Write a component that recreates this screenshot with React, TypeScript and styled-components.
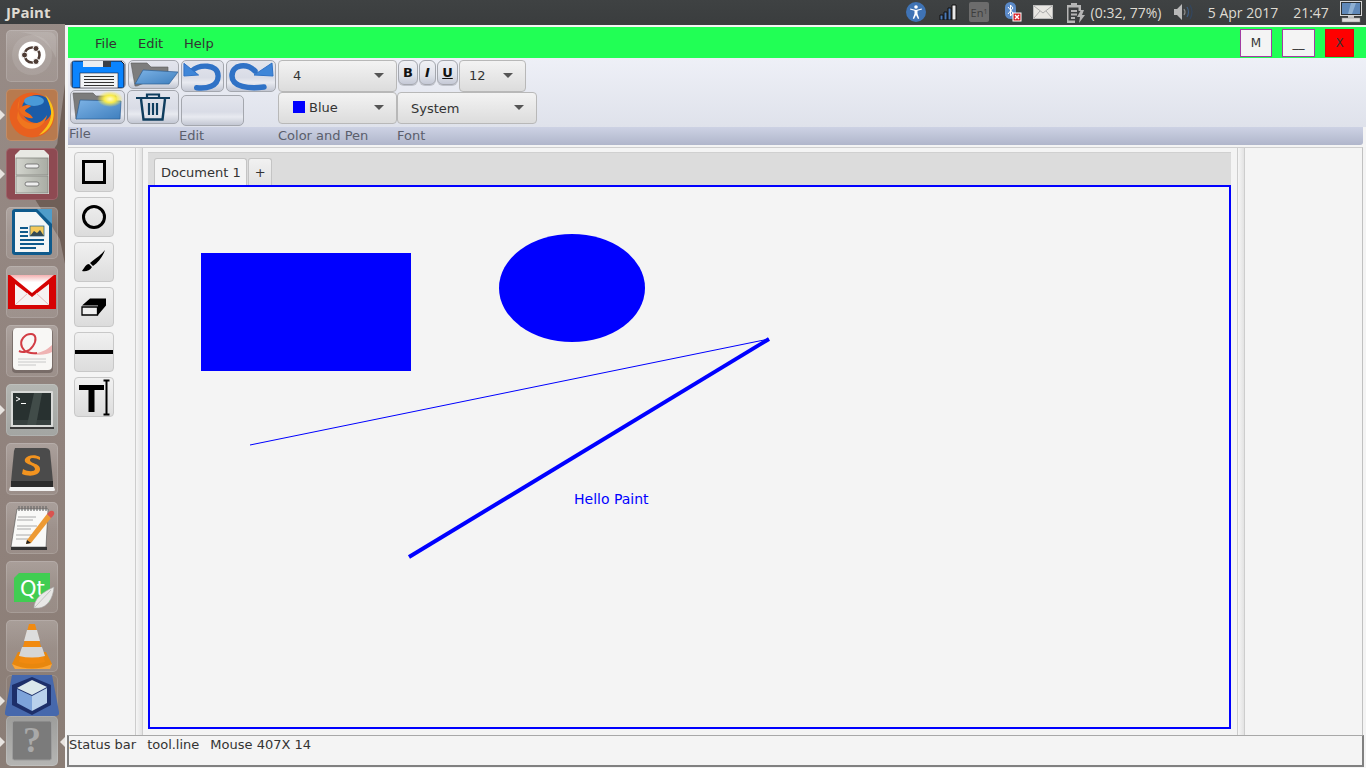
import { ReactNode } from 'react';
import styled, { createGlobalStyle } from 'styled-components';

const GlobalStyle = createGlobalStyle`
  html, body {
    margin: 0;
    width: 1366px;
    height: 768px;
    overflow: hidden;
    background: #f0f0f0;
    font-family: "DejaVu Sans", sans-serif;
    font-size: 13px;
    color: #333;
  }
  * { box-sizing: border-box; }
  svg { display: block; }
`;

const Screen = styled.div`
  width: 1366px;
  height: 768px;
  display: flex;
  flex-direction: column;
  background: #3c3f40;
`;

/* ---------- panel at the top ---------- */
const TopBar = styled.header`
  height: 24px;
  flex: none;
  display: flex;
  align-items: center;
  background: linear-gradient(#3f4243, #3a3d3e);
  color: #dfdbd2;
  font-family: "Open Sans", sans-serif;
`;
const AppTitle = styled.span`
  margin-left: 6px;
  font-size: 15px;
  font-weight: 700;
  flex: 1;
`;
const TrayItem = styled.span<{ $w: number; $ml: number }>`
  width: ${(p) => p.$w}px;
  margin-left: ${(p) => p.$ml}px;
  flex: none;
  display: flex;
  justify-content: center;
  font-size: 14px;
  white-space: nowrap;
`;

/* ---------- launcher ---------- */
const Main = styled.div`
  flex: 1;
  min-height: 0;
  display: flex;
`;
const Dock = styled.nav`
  position: relative;
  width: 65px;
  flex: none;
  padding: 6px 0 0 6px;
  display: flex;
  flex-direction: column;
  gap: 7px;
  background: linear-gradient(150deg, #978b86 0%, #90827c 60%, #8a7d75 100%);
  overflow: hidden;
`;
const Wallpaper = styled.div`
  position: absolute;
  inset: 0;
  background: #6f5f57;
  clip-path: polygon(100% 60px, 100% 240px, 92% 215px, 44% 165px, 88% 120px);
`;
const Tile = styled.div<{ $bg?: string; $h?: number; $mt?: number }>`
  position: relative;
  width: 52px;
  height: ${(p) => p.$h ?? 52}px;
  flex: none;
  border-radius: 5px;
  margin-top: ${(p) => p.$mt ?? 0}px;
  background: ${(p) =>
    p.$bg ?? 'linear-gradient(rgba(255,255,255,.24), rgba(255,255,255,.12) 55%, rgba(255,255,255,.1))'};
  box-shadow: inset 0 0 0 1px rgba(255, 255, 255, 0.14);
`;
const Pip = styled.i<{ $right?: boolean }>`
  position: absolute;
  top: 21px;
  ${(p) => (p.$right ? 'left: 54px;' : 'left: -6px;')}
  width: 0;
  height: 0;
  border-top: 5px solid transparent;
  border-bottom: 5px solid transparent;
  ${(p) => (p.$right ? 'border-right: 5px solid #e8e4e0;' : 'border-left: 5px solid #e8e4e0;')}
`;

/* ---------- window ---------- */
const Window = styled.div`
  flex: 1;
  min-width: 0;
  display: flex;
  flex-direction: column;
  margin-top: 1px;
  background: #f4f4f4;
  padding: 2px 0 0 3px;
`;
const MenuBar = styled.div`
  height: 31px;
  flex: none;
  display: flex;
  align-items: center;
  background: #21ff55;
  padding-left: 27px;
  padding-right: 12px;
`;
const MenuItem = styled.span<{ $w: number }>`
  width: ${(p) => p.$w}px;
  flex: none;
  margin-top: 2px;
  color: #333;
`;
const Spacer = styled.div`
  flex: 1;
`;
const WinButton = styled.button<{ $w: number; $ml: number; $red?: boolean }>`
  width: ${(p) => p.$w}px;
  margin-left: ${(p) => p.$ml}px;
  height: 28px;
  padding: 0;
  font: 12px "DejaVu Sans", sans-serif;
  color: #333;
  background: ${(p) => (p.$red ? '#ff0000' : '#f4f4f4')};
  border: 1px solid ${(p) => (p.$red ? '#e00010' : '#a23ca2')};
`;

const Toolbar = styled.div`
  height: 69px;
  flex: none;
  padding: 2px 0 0 2px;
  display: flex;
  background: linear-gradient(#eef0f7, #dfe2eb);
`;
const Column = styled.div<{ $w: number }>`
  width: ${(p) => p.$w}px;
  flex: none;
  display: flex;
  flex-direction: column;
`;
const Row = styled.div<{ $gap?: number; $mt?: number; $ml?: number }>`
  display: flex;
  gap: ${(p) => p.$gap ?? 0}px;
  margin-top: ${(p) => p.$mt ?? 0}px;
  margin-left: ${(p) => p.$ml ?? 0}px;
  align-items: flex-start;
`;
const IconButton = styled.div<{ $w: number; $h?: number; $mt?: number }>`
  width: ${(p) => p.$w}px;
  height: ${(p) => p.$h ?? 30}px;
  margin-top: ${(p) => p.$mt ?? 0}px;
  flex: none;
  display: flex;
  align-items: center;
  justify-content: center;
  border: 1px solid #a4a7ae;
  border-radius: 5px;
  background: linear-gradient(#e3e5ed, #d9dce6 55%, #e8eaf0 72%, #c3c7d3);
  overflow: hidden;
`;
const StyleButton = styled(IconButton)`
  height: 25px;
  border-radius: 6px;
  font: 700 13px "DejaVu Sans", sans-serif;
  color: #111;
  background: linear-gradient(#f0f1f5, #dfe2ea 60%, #c5c9d6);
  box-shadow: 0 1px 0 #c0c3cc;
`;
const Combo = styled.div<{ $w: number; $pl?: number; $pb?: number }>`
  width: ${(p) => p.$w}px;
  height: 32px;
  flex: none;
  padding-left: ${(p) => p.$pl ?? 14}px;
  padding-bottom: ${(p) => p.$pb ?? 0}px;
  display: flex;
  align-items: center;
  gap: 4px;
  position: relative;
  border: 1px solid #b8b8b8;
  border-radius: 4px;
  background: linear-gradient(#f3f3f3, #dcdcdc);
  color: #333;
`;
const Arrow = styled.i`
  position: absolute;
  right: 12px;
  top: 50%;
  margin-top: -3px;
  width: 0;
  height: 0;
  border-left: 5px solid transparent;
  border-right: 5px solid transparent;
  border-top: 5px solid #555;
`;
const Swatch = styled.i`
  width: 12px;
  height: 12px;
  background: #0000ff;
`;
const GroupBar = styled.div`
  height: 18px;
  flex: none;
  display: flex;
  align-items: center;
  color: #5a5e6c;
  padding: 0 0 2px 1px;
  background: linear-gradient(#cdd2e4, #b0b6cb);
  border-radius: 0 0 3px 0;
  margin-right: 3px;
`;
const GroupLabel = styled.span<{ $w: number; $up?: boolean }>`
  width: ${(p) => p.$w}px;
  flex: none;
  margin-top: ${(p) => (p.$up ? -3 : 0)}px;
`;

const Work = styled.div`
  flex: 1;
  min-height: 0;
  display: flex;
  margin-top: 2px;
  border-top: 1px solid #cfcfcf;
  margin-right: 3px;
  border-right: 1px solid #c0c0c0;
`;
const ToolPanel = styled.aside`
  width: 67px;
  flex: none;
  padding: 4px 0 0 6px;
  display: flex;
  flex-direction: column;
  gap: 5px;
`;
const ToolButton = styled.div`
  width: 40px;
  height: 40px;
  display: flex;
  align-items: center;
  justify-content: center;
  border: 1px solid #c8c8c8;
  border-radius: 4px;
  background: linear-gradient(#f1f1f1, #dcdcdc);
`;
const Splitter = styled.div`
  width: 8px;
  flex: none;
  border-left: 1px solid #cdcdcd;
  border-right: 1px solid #cdcdcd;
  background: linear-gradient(90deg, #f6f6f6, #e2e2e2);
`;
const DocArea = styled.section`
  width: 1094px;
  flex: none;
  padding: 4px 6px 6px 5px;
  display: flex;
  flex-direction: column;
`;
const TabStrip = styled.div`
  height: 33px;
  flex: none;
  padding: 5px 0 0 6px;
  display: flex;
  gap: 1px;
  background: #dcdcdc;
  border-top: 1px solid #d0d0d0;
`;
const Tab = styled.div<{ $active?: boolean }>`
  height: 27px;
  padding: 1px 5px 0 6px;
  display: flex;
  align-items: center;
  border: 1px solid #c4c4c4;
  border-bottom: 0;
  border-radius: 3px 3px 0 0;
  background: ${(p) => (p.$active ? '#f4f4f4' : 'linear-gradient(#f1f1f1,#e2e2e2)')};
  color: #333;
`;
const Canvas = styled.div`
  flex: 1;
  min-height: 0;
  border: 2px solid #0000ff;
  background: #f4f4f4;
`;
const SidePanel = styled.aside`
  flex: 1;
`;
const StatusBar = styled.footer`
  height: 32px;
  flex: none;
  padding-top: 1px;
  display: flex;
  gap: 11px;
  margin: 0 2px 1px -1px;
  border: 2px solid #808080;
  border-top: 1px solid #a8a8a8;
  line-height: 16px;
`;
const LangIcon = styled.span`
  width: 20px;
  height: 20px;
  display: flex;
  align-items: center;
  justify-content: center;
  background: #6c6c6c;
  border-radius: 2px;
  font: 11px "Open Sans", sans-serif;
  color: #3d3d3d;
  sub {
    font-size: 7px;
    line-height: 0;
    vertical-align: -2px;
  }
`;

/* ---------- launcher icons ---------- */
const Icon = ({ children }: { children: ReactNode }) => (
  <svg width="52" height="52" viewBox="0 0 52 52">
    {children}
  </svg>
);

const UbuntuIcon = () => (
  <Icon>
    <path d="M6 2c18-1 36 6 44 26v-18q0-8-8-8z" fill="#fff" opacity=".12" />
    <circle cx="26" cy="25" r="20" fill="#fff" opacity=".1" />
    <circle cx="26" cy="25" r="13.5" fill="#fff" />
    <circle cx="26" cy="25" r="7.5" fill="none" stroke="#4d3b34" strokeWidth="2.6" />
    <circle cx="18.5" cy="25" r="3" fill="#4d3b34" stroke="#fff" strokeWidth="1" />
    <circle cx="30" cy="18.5" r="3" fill="#4d3b34" stroke="#fff" strokeWidth="1" />
    <circle cx="30" cy="31.5" r="3" fill="#4d3b34" stroke="#fff" strokeWidth="1" />
  </Icon>
);
const FirefoxIcon = () => (
  <Icon>
    <circle cx="26" cy="26" r="22.5" fill="#e8601f" />
    <ellipse cx="31" cy="20" rx="15" ry="14" fill="#1b5ca8" />
    <ellipse cx="28" cy="12" rx="10" ry="5" fill="#4a9ad8" />
    <path d="M14 8c-1 5-3 8-2 13 1 9 10 15 19 13 4-1 8-4 10-8-1 8-8 14-17 14-6 0-11-5-13-11z" fill="#f0761e" />
    <path d="M13 20c4-4 9-5 12-3-2 2-6 3-6 5 2 2 6 3 8 7-5 1-12-2-14-9z" fill="#ee6b1c" />
    <path d="M39 6c8 7 11 18 7 28-3 6-7 10-13 12 8-7 13-15 12-24-1-6-3-11-6-16z" fill="#f9c21a" />
  </Icon>
);
const CabinetIcon = () => (
  <Icon>
    <defs>
      <linearGradient id="cab" x1="0" x2="1">
        <stop offset="0" stopColor="#d3d5ce" />
        <stop offset="1" stopColor="#a9aca4" />
      </linearGradient>
    </defs>
    <path d="M14 2h24l5 5v39H9V7z" fill="#e8e9e4" />
    <rect x="10" y="10" width="32" height="17" fill="url(#cab)" stroke="#84867f" strokeWidth=".8" />
    <rect x="10" y="28" width="32" height="17" fill="url(#cab)" stroke="#84867f" strokeWidth=".8" />
    <rect x="19" y="16" width="14" height="4" rx="2" fill="#eee" stroke="#666" strokeWidth=".8" />
    <rect x="19" y="34" width="14" height="4" rx="2" fill="#eee" stroke="#666" strokeWidth=".8" />
  </Icon>
);
const WriterIcon = () => (
  <Icon>
    <rect x="6" y="2" width="40" height="46" rx="3" fill="#0f5a8c" />
    <path d="M31 2h15v15z" fill="#4f9cc9" />
    <path d="M9 5h21l13 14v26H9z" fill="#f4f6f6" />
    <rect x="14" y="20" width="8" height="2" fill="#0f5a8c" />
    <rect x="14" y="24" width="8" height="2" fill="#0f5a8c" />
    <rect x="14" y="28" width="8" height="2" fill="#0f5a8c" />
    <rect x="14" y="32" width="24" height="2" fill="#0f5a8c" />
    <rect x="14" y="36" width="24" height="2" fill="#0f5a8c" />
    <rect x="14" y="40" width="16" height="2" fill="#0f5a8c" />
    <rect x="24" y="19" width="14" height="10" fill="#f4c95a" stroke="#0f5a8c" strokeWidth=".7" />
    <path d="M24 29l4-5 3 2 3-3 4 6z" fill="#334a55" />
  </Icon>
);
const GmailIcon = () => (
  <Icon>
    <defs>
      <linearGradient id="flap" x1="0" x2="0" y1="0" y2="1">
        <stop offset="0" stopColor="#f4b0b0" />
        <stop offset=".4" stopColor="#fff" />
      </linearGradient>
    </defs>
    <rect x="2" y="9" width="48" height="34" fill="#d60303" />
    <path d="M4 9h44L26 27z" fill="url(#flap)" />
    <path d="M9 18l17 13 17-13v21H9z" fill="#f6f2f2" />
    <path d="M9 39l13-12M43 39L30 27" stroke="#e3b9b9" strokeWidth="1" />
    <path d="M21 25l5 4 5-4-5 3z" fill="#b00000" />
  </Icon>
);
const EvinceIcon = () => (
  <Icon>
    <rect x="6" y="4" width="41" height="44" rx="4" fill="#4c403c" opacity=".45" />
    <rect x="7" y="3" width="39" height="42" rx="4" fill="#f8f7f5" />
    <path d="M24 28c8 1 16-2 22-8v7c-6 3-14 4-22 1z" fill="#efb3b3" />
    <path d="M13 26c4 2 10 1 14-5 4-6 3-12-2-12-6 0-12 6-9 13 2 5 9 7 15 6" fill="none" stroke="#d23c44" strokeWidth="2" />
    <path d="M12 34h28M12 37h28M12 40h18" stroke="#c8c8c8" strokeWidth="1" />
  </Icon>
);
const TerminalIcon = () => (
  <Icon>
    <rect x="5" y="7" width="42" height="36" rx="1" fill="#d9dad8" />
    <rect x="7" y="9" width="38" height="32" fill="#283130" />
    <path d="M28 9h8l-6 32h-9z" fill="#56625f" opacity=".55" />
    <path d="M7 36h38v5H7z" fill="#3f4a48" opacity=".6" />
    <rect x="4" y="43" width="44" height="2" fill="#3a3a3a" />
    <path d="M10 13l4 2-4 2" fill="none" stroke="#fff" strokeWidth="1" />
    <rect x="15" y="19" width="5" height="1" fill="#fff" />
  </Icon>
);
const SublimeIcon = () => (
  <Icon>
    <path d="M9 5h30q4 0 5 3l3 31H5L8 8z" fill="#4b4b4b" />
    <rect x="5" y="38" width="42" height="6" fill="#2b2b2b" />
    <path d="M4 44h44l1 3q0 1-2 1H5q-2 0-2-1z" fill="#f2f2f2" />
    <path d="M34 14c-5-3-13-2-15 2-2 6 10 5 10 10 0 3-7 3-12 0l-1 5c7 3 17 2 18-4 1-7-10-6-10-10 0-3 6-2 10 0z" fill="#f2931f" />
  </Icon>
);
const NotepadIcon = () => (
  <Icon>
    <path d="M11 7h31l-2 38H5z" fill="#f9f9f7" stroke="#3a3a3a" strokeWidth=".5" />
    <rect x="5" y="45" width="36" height="3" fill="#333" />
    <path d="M13 4v5M16 4v5M19 4v5M22 4v5M25 4v5M28 4v5M31 4v5M34 4v5M37 4v5M40 4v5" stroke="#666" strokeWidth="1.1" />
    <path d="M12 15h18M11 18h16M11 24h20M11 27h14M10 33h16M10 37h12" stroke="#aaa" strokeWidth="1" />
    <path d="M21 38L41 12l4 4-20 25-5 1z" fill="#ed9a33" />
    <path d="M41 12l3-3q3-1 4 1t-1 4l-2 2z" fill="#d9534f" />
    <path d="M20 42l1-4 4 3z" fill="#222" />
  </Icon>
);
const QtIcon = () => (
  <Icon>
    <path d="M13 12h31v29H8V17z" fill="#41cd52" />
    <text x="14" y="35" fontFamily="DejaVu Sans" fontSize="21" fill="#fff">Qt</text>
    <path d="M28 47c0-9 8-16 20-21-1 12-7 20-15 21z" fill="#e8e8e6" stroke="#aaa" strokeWidth=".6" />
    <path d="M29 46l16-17" stroke="#aaa" strokeWidth=".6" />
  </Icon>
);
const VlcIcon = () => (
  <Icon>
    <path d="M6 44l6-12h28l6 12-3 5H9z" fill="#e8870e" />
    <path d="M6 44q20 9 40 0l-2 5H9z" fill="#f9a63a" />
    <path d="M23 4h6l10 38q-13 4-26 0z" fill="#f18a10" />
    <path d="M21 10h10l3 11H18z" fill="#dddddd" />
    <path d="M16 27h20l3 9q-13 3-26 0z" fill="#d6d6d6" />
  </Icon>
);
const CubeIcon = styled(({ className }: { className?: string }) => (
  <svg className={className} width="54" height="41" viewBox="0 0 54 41">
    <path d="M7 0h40l7 37a3 3 0 0 1-3 4H3a3 3 0 0 1-3-4z" fill="#4668ac" />
    <path d="M27 2l19 8v20l-19 10L7 30V10z" fill="#1d2f6a" />
    <path d="M27 5l15 7-15 8-15-7z" fill="#dbe8ec" />
    <path d="M12 14l15 7v15l-15-8z" fill="#7da3da" />
    <path d="M42 13v15l-15 8V21z" fill="#b9d1ec" />
  </svg>
))`
  margin-left: -1px;
`;
const HelpIcon = () => (
  <svg width="52" height="50" viewBox="0 0 52 50">
    <rect x="6.5" y="5" width="39" height="39" rx="2" fill="#7b7b7b" stroke="#9c9c9c" />
    <text x="26" y="36" textAnchor="middle" fontFamily="Liberation Serif" fontWeight="700" fontSize="36" fill="#a9a9a9">?</text>
  </svg>
);

/* ---------- tray icons ---------- */
const AccessIcon = () => (
  <svg width="20" height="20" viewBox="0 0 20 20">
    <circle cx="10" cy="10" r="10" fill="#3f73b5" />
    <circle cx="10" cy="5" r="1.8" fill="#fff" />
    <path d="M4 7.5l4.5 1.2v3L6.8 16.5 8 17l2-4 2 4 1.2-.5-1.7-4.8v-3L16 7.5l-.3-1L10 8 4.3 6.5z" fill="#fff" />
  </svg>
);
const SignalIcon = () => (
  <svg width="18" height="16" viewBox="0 0 18 16">
    <path d="M1 11h3v5H1zM5 8h3v8H5zM9 4h3v12H9z" fill="#4a79b5" stroke="#111" strokeWidth="1" />
    <path d="M13 1h4v15h-4z" fill="#e8e8e8" stroke="#111" strokeWidth="1" />
  </svg>
);
const BluetoothIcon = () => (
  <svg width="18" height="20" viewBox="0 0 18 20">
    <rect x="1" y="0" width="11" height="17" rx="5.5" fill="#5b8ac8" />
    <path d="M4 5l5 6-2.5 3V3L9 6l-5 6" fill="none" stroke="#fff" strokeWidth="1" />
    <rect x="9" y="11" width="8" height="8" fill="#d81f26" stroke="#fff" strokeWidth="1" />
    <path d="M11 13l4 4M15 13l-4 4" stroke="#fff" strokeWidth="1.4" />
  </svg>
);
const MailIcon = () => (
  <svg width="20" height="14" viewBox="0 0 20 14">
    <rect x=".5" y=".5" width="19" height="13" fill="#e8e6e2" stroke="#bbb" />
    <path d="M1 1l9 7 9-7M1 13l6-7M19 13l-6-7" fill="none" stroke="#aaa" />
  </svg>
);
const BatteryIcon = () => (
  <svg width="20" height="21" viewBox="0 0 20 21">
    <path d="M1 3h4V1h6v2h4v6h-2.500V5.500h-10v13H9V21H1z" fill="#b5b5b5" />
    <path d="M5 8h6v2H5zM5 11.500h6v2H5zM5 15h4v2H5z" fill="#b5b5b5" />
    <path d="M15 8l-4 7h3l-1 6 6-8h-3l2-5z" fill="#b5b5b5" />
  </svg>
);
const VolumeIcon = () => (
  <svg width="22" height="20" viewBox="0 0 22 20">
    <path d="M1 7h3l5-5v16l-5-5H1z" fill="#b9b9b9" />
    <path d="M11 7q2 3 0 6" fill="none" stroke="#8a8a8a" strokeWidth="1.2" />
    <path d="M14 5q3 5 0 10" fill="none" stroke="#3f5d82" strokeWidth="1.2" />
    <path d="M17 3q4 7 0 14" fill="none" stroke="#33465e" strokeWidth="1.2" />
  </svg>
);
const ComputerIcon = () => (
  <svg width="22" height="22" viewBox="0 0 22 22">
    <rect x=".5" y=".5" width="21" height="14" fill="#2c3134" stroke="#d6d6d6" />
    <rect x="2" y="2" width="18" height="11" fill="#5f88b8" />
    <path d="M11 2h5l-4 11H8z" fill="#8fb0d2" />
    <rect x="8" y="15" width="6" height="2" fill="#ccc" />
    <rect x="2" y="17" width="18" height="4" fill="#dcdcdc" stroke="#888" strokeWidth=".5" />
  </svg>
);

/* ---------- toolbar icons ---------- */
const FolderGradient = ({ id }: { id: string }) => (
  <defs>
    <linearGradient id={id} x1="0" x2="1" y1="0" y2="1">
      <stop offset="0" stopColor="#7db3e6" />
      <stop offset="1" stopColor="#3f7fbe" />
    </linearGradient>
  </defs>
);
const SaveIcon = () => (
  <svg width="54" height="27" viewBox="0 0 54 27">
    <path d="M1 0h49l3 3v24H1z" fill="#0a84ff" stroke="#112" strokeWidth="1" />
    <rect x="12" y="0" width="28" height="6" fill="#eceef1" />
    <rect x="32" y="0" width="8" height="6" fill="#3b3f46" />
    <rect x="9" y="12" width="38" height="15" fill="#f1f3f5" stroke="#223" strokeWidth=".6" />
    <path d="M13 15.500h30M13 18.500h30M13 21.500h30M13 24.500h30" stroke="#333" strokeWidth="1" />
  </svg>
);
const FolderIcon = () => (
  <svg width="49" height="27" viewBox="0 0 49 27">
    <FolderGradient id="open-front" />
    <path d="M2 2h16l4 4h17v6L8 25H6z" fill="#7d7d7d" stroke="#5a5a5a" strokeWidth=".6" />
    <path d="M14 9l35 2-9 12H6z" fill="url(#open-front)" stroke="#2d5f94" strokeWidth=".7" />
  </svg>
);
const FolderGlowIcon = () => (
  <svg width="53" height="32" viewBox="0 0 53 32">
    <defs>
      <radialGradient id="glow">
        <stop offset="0" stopColor="#fffbd0" />
        <stop offset=".45" stopColor="#f9ec4a" />
        <stop offset="1" stopColor="#f9ec4a" stopOpacity="0" />
      </radialGradient>
    </defs>
    <FolderGradient id="glow-front" />
    <path d="M2 2h20l3 3h20v10L5 28z" fill="#7c7c7c" stroke="#5a5a5a" strokeWidth=".6" />
    <path d="M9 9l41 1-1 18H5z" fill="url(#glow-front)" stroke="#2d5f94" strokeWidth=".7" />
    <ellipse cx="39" cy="8" rx="13" ry="8" fill="url(#glow)" />
  </svg>
);
const TrashIcon = () => (
  <svg width="34" height="28" viewBox="0 0 34 28">
    <path d="M0 5h34M11 5V1.500h12V5" fill="none" stroke="#0f3d5e" strokeWidth="2.200" />
    <path d="M5 6l2.500 20.500h19L29 6" fill="none" stroke="#0f3d5e" strokeWidth="2.400" />
    <path d="M13 10v12M17 10v12M21 10v12" stroke="#0f3d5e" strokeWidth="2.200" />
  </svg>
);
const UndoIcon = () => (
  <svg width="42" height="30" viewBox="5 3 42 30">
    <path d="M15 13C22 6 42 5 42 18 42 29 30 31 20 30" fill="none" stroke="#2f72c6" strokeWidth="5.500" strokeLinecap="round" />
    <path d="M7 5v13l15-1z" fill="#3f86d8" stroke="#2f72c6" strokeWidth="1" />
  </svg>
);
const RedoIcon = () => (
  <svg width="48" height="30" viewBox="50 3 48 30">
    <path d="M78 13C70 5 55 6 55 18 55 29 72 31 87 29" fill="none" stroke="#2f72c6" strokeWidth="5.500" strokeLinecap="round" />
    <path d="M95 5l1 13-19-1z" fill="#3f86d8" stroke="#2f72c6" strokeWidth="1" />
  </svg>
);

/* ---------- side tool icons ---------- */
const BrushIcon = () => (
  <svg width="26" height="24" viewBox="0 0 26 24">
    <path d="M24 0C20 5 15 8 9 13l3 3C18 12 22 6 24 0z" fill="#000" />
    <path d="M8 14c-3 0-4 3-7 7 3 1 8 0 10-4z" fill="#000" />
  </svg>
);
const EraserIcon = () => (
  <svg width="26" height="18" viewBox="0 0 26 18">
    <path d="M9 .5h16v7l-8 9.500V7.500H1z" fill="#000" />
    <path d="M1 9h15.500v8H1z" fill="#f0f0f0" stroke="#000" strokeWidth="1.300" />
  </svg>
);
const TextIcon = () => (
  <svg width="38" height="38" viewBox="0 0 38 38">
    <path d="M4 7h25v5h-9.500v22h-6V12H4z" fill="#000" />
    <path d="M31.500 2v35M28.500 2.500h6M28.500 36.500h6" stroke="#000" strokeWidth="2" />
  </svg>
);

const canvasInk = '#0000ff';

const tools = [
  <svg key="rect" width="24" height="24"><rect x="1.500" y="1.500" width="21" height="21" fill="none" stroke="#000" strokeWidth="3" /></svg>,
  <svg key="oval" width="24" height="24"><circle cx="12" cy="12" r="10.500" fill="none" stroke="#000" strokeWidth="3" /></svg>,
  <BrushIcon key="brush" />,
  <EraserIcon key="eraser" />,
  <svg key="line" width="38" height="38"><rect y="17" width="38" height="4" fill="#000" /></svg>,
  <TextIcon key="text" />,
];

const App = () => (
  <Screen>
    <GlobalStyle />
    <TopBar>
      <AppTitle>JPaint</AppTitle>
      <TrayItem $w={20} $ml={0}><AccessIcon /></TrayItem>
      <TrayItem $w={18} $ml={13}><SignalIcon /></TrayItem>
      <TrayItem $w={20} $ml={12}><LangIcon>En<sub>1</sub></LangIcon></TrayItem>
      <TrayItem $w={18} $ml={15}><BluetoothIcon /></TrayItem>
      <TrayItem $w={20} $ml={11}><MailIcon /></TrayItem>
      <TrayItem $w={20} $ml={13}><BatteryIcon /></TrayItem>
      <TrayItem $w={72} $ml={4}>(0:32, 77%)</TrayItem>
      <TrayItem $w={22} $ml={11}><VolumeIcon /></TrayItem>
      <TrayItem $w={72} $ml={12}>5 Apr 2017</TrayItem>
      <TrayItem $w={36} $ml={14}>21:47</TrayItem>
      <TrayItem $w={22} $ml={11}><ComputerIcon /></TrayItem>
      <TrayItem $w={4} $ml={0} />
    </TopBar>
    <Main>
      <Dock>
        <Wallpaper />
        <Tile><UbuntuIcon /></Tile>
        <Tile $bg="#b87a4e"><Pip /><FirefoxIcon /></Tile>
        <Tile $bg="#8e4a52"><Pip /><CabinetIcon /></Tile>
        <Tile><WriterIcon /></Tile>
        <Tile><GmailIcon /></Tile>
        <Tile><EvinceIcon /></Tile>
        <Tile $bg="linear-gradient(#b4b6b2,#a3a5a2)"><Pip /><TerminalIcon /></Tile>
        <Tile><SublimeIcon /></Tile>
        <Tile><NotepadIcon /></Tile>
        <Tile><QtIcon /></Tile>
        <Tile><VlcIcon /></Tile>
        <Tile $h={41} $mt={-4} $bg="transparent"><Pip /><CubeIcon /></Tile>
        <Tile $h={50} $mt={-7} $bg="linear-gradient(#9d9d9b,#b5b5b3)"><Pip /><Pip $right /><HelpIcon /></Tile>
      </Dock>
      <Window>
        <MenuBar>
          <MenuItem $w={43}>File</MenuItem>
          <MenuItem $w={46}>Edit</MenuItem>
          <MenuItem $w={40}>Help</MenuItem>
          <Spacer />
          <WinButton $w={32} $ml={0}>M</WinButton>
          <WinButton $w={33} $ml={10}>__</WinButton>
          <WinButton $w={29} $ml={10} $red>X</WinButton>
        </MenuBar>
        <Toolbar>
          <Column $w={208}>
            <Row $gap={2}>
              <IconButton $w={56} $h={29}><SaveIcon /></IconButton>
              <IconButton $w={51} $h={29}><FolderIcon /></IconButton>
              <IconButton $w={43} $h={32}><UndoIcon /></IconButton>
              <IconButton $w={50} $h={32}><RedoIcon /></IconButton>
            </Row>
            <Row $gap={2} $mt={-2}>
              <IconButton $w={55} $h={34}><FolderGlowIcon /></IconButton>
              <IconButton $w={52} $h={34}><TrashIcon /></IconButton>
              <IconButton $w={63} $h={31} $mt={5} />
            </Row>
          </Column>
          <Column $w={119}>
            <Combo $w={119} $pb={2}>4<Arrow /></Combo>
            <Combo $w={119} $pb={2}>
              <Swatch />Blue<Arrow />
            </Combo>
          </Column>
          <Column $w={140}>
            <Row $gap={1} $ml={1}>
              <StyleButton $w={20}>B</StyleButton>
              <StyleButton $w={17}><em>I</em></StyleButton>
              <StyleButton $w={21}><u>U</u></StyleButton>
              <Combo $w={67} $pl={9} $pb={2}>12<Arrow /></Combo>
            </Row>
            <Combo $w={140} $pl={13}>System<Arrow /></Combo>
          </Column>
        </Toolbar>
        <GroupBar>
          <GroupLabel $w={110} $up>File</GroupLabel>
          <GroupLabel $w={99}>Edit</GroupLabel>
          <GroupLabel $w={119}>Color and Pen</GroupLabel>
          <GroupLabel $w={60}>Font</GroupLabel>
        </GroupBar>
        <Work>
          <ToolPanel>
            {tools.map((tool) => (
              <ToolButton key={tool.key}>{tool}</ToolButton>
            ))}
          </ToolPanel>
          <Splitter />
          <DocArea>
            <TabStrip>
              <Tab $active>Document 1</Tab>
              <Tab>+</Tab>
            </TabStrip>
            <Canvas>
              <svg width="1078" height="540">
                <rect x="51" y="66" width="210" height="118" fill={canvasInk} />
                <ellipse cx="422" cy="101" rx="73" ry="54" fill={canvasInk} />
                <line x1="100" y1="258" x2="619" y2="152" stroke={canvasInk} strokeWidth="1" />
                <line x1="259" y1="370" x2="619" y2="152" stroke={canvasInk} strokeWidth="4" />
                <text x="424" y="317" fontFamily="DejaVu Sans" fontSize="14" fill={canvasInk}>Hello Paint</text>
              </svg>
            </Canvas>
          </DocArea>
          <Splitter />
          <SidePanel />
        </Work>
        <StatusBar>
          <span>Status bar</span>
          <span>tool.line</span>
          <span>Mouse 407X 14</span>
        </StatusBar>
      </Window>
    </Main>
  </Screen>
);

export default App;
